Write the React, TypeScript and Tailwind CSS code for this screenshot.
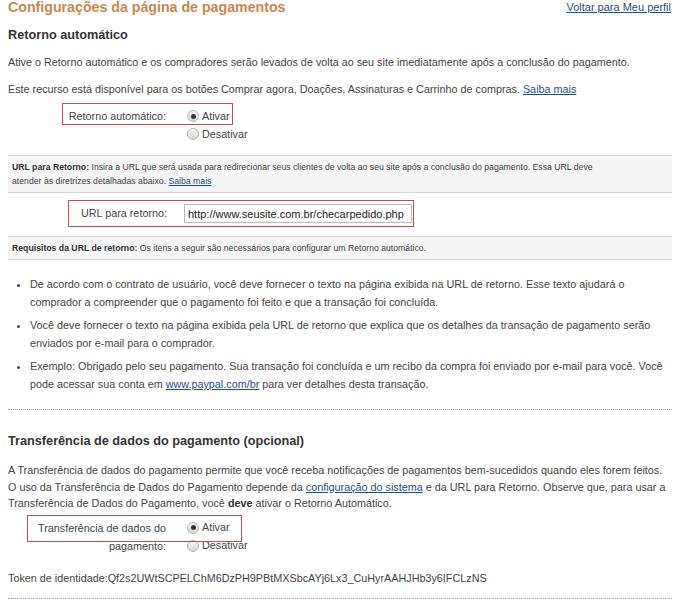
import React from "react"

const linkCls = "text-[#1f4f82] underline"

function Radio({ checked }: { checked?: boolean }) {
  return (
    <span className="inline-flex h-[12px] w-[12px] items-center justify-center rounded-full border border-[#b5b5b5] bg-gradient-to-b from-[#f4f4f4] to-[#d8d8d8]">
      {checked && <span className="h-[5px] w-[5px] rounded-full bg-[#333]" />}
    </span>
  )
}

function Highlight({ className }: { className: string }) {
  return <span className={`pointer-events-none absolute border border-[#c0504d] ${className}`} />
}

function RadioField({ label, highlight }: { label: string; highlight: string }) {
  return (
    <div className="relative">
      <Highlight className={highlight} />
      <div className="flex">
        <div className="ml-[22px] w-[136px] text-right leading-[18px]">{label}</div>
        <div className="ml-[21px] flex flex-col">
          <label className="flex h-[18px] items-center gap-[3px]">
            <Radio checked />
            <span>Ativar</span>
          </label>
          <label className="flex h-[18px] items-center gap-[3px]">
            <Radio />
            <span>Desativar</span>
          </label>
        </div>
      </div>
    </div>
  )
}

function InfoBar({ title, children }: { title: string; children: React.ReactNode }) {
  return (
    <div className="border-y border-[#d6d6d6] bg-[#f5f5f5] py-[4px] pl-[4px] pr-[65px] text-[8.7px] leading-[14px] text-[#444]">
      <b className="text-[#333]">{title}</b> {children}
    </div>
  )
}

export default function App() {
  return (
    <div className="w-[679px] bg-white pl-[8px] pr-[7px] font-['Liberation_Sans',Arial,sans-serif] text-[10.8px] text-[#444]">
      <div className="flex items-start justify-between">
        <h1 className="text-[14.2px] font-bold leading-[15px] text-[#c7884b]">
          Configurações da página de pagamentos
        </h1>
        <a href="#" className={`${linkCls} mr-[1px] text-[11px] leading-[14px]`}>
          Voltar para Meu perfil
        </a>
      </div>

      <h2 className="mt-[12px] text-[12.7px] font-bold leading-[16px] text-[#333]">Retorno automático</h2>
      <p className="mt-[11px] leading-[16px]">
        Ative o Retorno automático e os compradores serão levados de volta ao seu site imediatamente após a conclusão do pagamento.
      </p>
      <p className="mt-[11px] leading-[16px]">
        Este recurso está disponível para os botões Comprar agora, Doações, Assinaturas e Carrinho de compras.{" "}
        <a href="#" className={linkCls}>Saiba mais</a>
      </p>

      <div className="mt-[10px]">
        <RadioField label="Retorno automático:" highlight="left-[54px] top-[-4px] h-[22px] w-[171px]" />
      </div>

      <div className="mt-[12px]">
        <InfoBar title="URL para Retorno:">
          Insira a URL que será usada para redirecionar seus clientes de volta ao seu site após a conclusão do pagamento. Essa URL deve atender às diretrizes detalhadas abaixo.{" "}
          <a href="#" className={linkCls}>Saiba mais</a>
        </InfoBar>
      </div>

      <div className="relative mt-[7px] mb-[9px]">
        <Highlight className="left-[60px] top-0 h-[27px] w-[346px]" />
        <div className="flex items-center py-[4px]">
          <div className="ml-[22px] w-[137px] text-right">URL para retorno:</div>
          <input
            readOnly
            value="http://www.seusite.com.br/checarpedido.php"
            className="ml-[17px] h-[19px] w-[228px] border border-[#b9b9b9] bg-white px-[3px] font-['Liberation_Sans',Arial,sans-serif] text-[11px] text-[#222] outline-none"
          />
        </div>
      </div>

      <InfoBar title="Requisitos da URL de retorno:">
        Os itens a seguir são necessários para configurar um Retorno automático.
      </InfoBar>

      <ul className="mt-[15px] list-disc space-y-[5px] pl-[22px] leading-[18px]">
        <li>
          De acordo com o contrato de usuário, você deve fornecer o texto na página exibida na URL de retorno. Esse texto ajudará o comprador a compreender que o pagamento foi feito e que a transação foi concluída.
        </li>
        <li>
          Você deve fornecer o texto na página exibida pela URL de retorno que explica que os detalhes da transação de pagamento serão enviados por e-mail para o comprador.
        </li>
        <li>
          Exemplo: Obrigado pelo seu pagamento. Sua transação foi concluída e um recibo da compra foi enviado por e-mail para você. Você pode acessar sua conta em{" "}
          <a href="#" className={linkCls}>www.paypal.com/br</a> para ver detalhes desta transação.
        </li>
      </ul>

      <div className="mt-[16px] border-t border-dotted border-[#9a9a9a]" />

      <h2 className="mt-[23px] text-[12.7px] font-bold leading-[16px] text-[#333]">
        Transferência de dados do pagamento (opcional)
      </h2>
      <p className="mt-[13px] leading-[16.5px]">
        A Transferência de dados do pagamento permite que você receba notificações de pagamentos bem-sucedidos quando eles forem feitos.
        <br />
        O uso da Transferência de Dados do Pagamento depende da{" "}
        <a href="#" className={linkCls}>configuração do sistema</a> e da URL para Retorno. Observe que, para usar a Transferência de Dados do Pagamento, você <b className="text-[#333]">deve</b> ativar o Retorno Automático.
      </p>

      <div className="mt-[7px]">
        <RadioField label="Transferência de dados do pagamento:" highlight="left-[19px] top-[-4px] h-[27px] w-[215px]" />
      </div>

      <p className="mt-[15px] leading-[16px]">
        Token de identidade:Qf2s2UWtSCPELChM6DzPH9PBtMXSbcAYj6Lx3_CuHyrAAHJHb3y6IFCLzNS
      </p>
      <div className="mt-[12px] border-t border-dotted border-[#9a9a9a]" />
    </div>
  )
}
